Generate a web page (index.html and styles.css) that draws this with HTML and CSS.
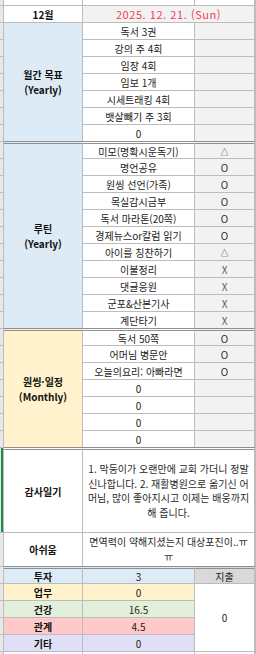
FILE: index.html
```html
<!DOCTYPE html>
<html lang="ko">
<head>
<meta charset="utf-8">
<title>12월</title>
<link rel="stylesheet" href="styles.css">
</head>
<body>
<div class="sheet">
  <!-- partial top row -->
  <div class="s"></div><div class="a"></div><div class="b"></div><div class="c"></div><div class="d"></div>
  <!-- header -->
  <div class="s"></div><div class="a bold">12월</div><div class="bc date">2025. 12. 21. (Sun)</div><div class="d"></div>

  <!-- 월간 목표 -->
  <div class="s"></div><div class="a blue r7 bold m"><span>월간 목표</span><span>(Yearly)</span></div><div class="b">독서 3권</div><div class="c gray"></div><div class="d"></div>
  <div class="s"></div><div class="b">강의 주 4회</div><div class="c gray"></div><div class="d"></div>
  <div class="s"></div><div class="b">임장 4회</div><div class="c gray"></div><div class="d"></div>
  <div class="s"></div><div class="b">임보 1개</div><div class="c gray"></div><div class="d"></div>
  <div class="s"></div><div class="b">시세트래킹 4회</div><div class="c gray"></div><div class="d"></div>
  <div class="s"></div><div class="b">뱃살빼기 주 3회</div><div class="c gray"></div><div class="d"></div>
  <div class="s"></div><div class="b">0</div><div class="c gray"></div><div class="d"></div>

  <!-- 루틴 -->
  <div class="s"></div><div class="a blue r11 bold m top"><span>루틴</span><span>(Yearly)</span></div><div class="b top">미모(명확시운독기)</div><div class="c gray top sym tri">△</div><div class="d"></div>
  <div class="s"></div><div class="b">명언공유</div><div class="c gray sym">O</div><div class="d"></div>
  <div class="s"></div><div class="b">원씽 선언(가족)</div><div class="c gray sym">O</div><div class="d"></div>
  <div class="s"></div><div class="b">목실감시금부</div><div class="c gray sym">O</div><div class="d"></div>
  <div class="s"></div><div class="b">독서 마라톤(20쪽)</div><div class="c gray sym">O</div><div class="d"></div>
  <div class="s"></div><div class="b">경제뉴스or칼럼 읽기</div><div class="c gray sym">O</div><div class="d"></div>
  <div class="s"></div><div class="b">아이를 칭찬하기</div><div class="c gray sym tri">△</div><div class="d"></div>
  <div class="s"></div><div class="b">이불정리</div><div class="c gray sym x">X</div><div class="d"></div>
  <div class="s"></div><div class="b">댓글응원</div><div class="c gray sym x">X</div><div class="d"></div>
  <div class="s"></div><div class="b">군포&amp;산본기사</div><div class="c gray sym x">X</div><div class="d"></div>
  <div class="s"></div><div class="b">계단타기</div><div class="c gray sym x">X</div><div class="d"></div>

  <!-- 원씽·일정 -->
  <div class="s"></div><div class="a yellow r7 bold m top"><span>원씽·일정</span><span>(Monthly)</span></div><div class="b top">독서 50쪽</div><div class="c gray top sym">O</div><div class="d"></div>
  <div class="s"></div><div class="b">어머님 병문안</div><div class="c gray sym">O</div><div class="d"></div>
  <div class="s"></div><div class="b">오늘의요리: 아빠라면</div><div class="c gray sym">O</div><div class="d"></div>
  <div class="s"></div><div class="b">0</div><div class="c gray"></div><div class="d"></div>
  <div class="s"></div><div class="b">0</div><div class="c gray"></div><div class="d"></div>
  <div class="s"></div><div class="b">0</div><div class="c gray"></div><div class="d"></div>
  <div class="s"></div><div class="b">0</div><div class="c gray"></div><div class="d"></div>

  <!-- 감사일기 -->
  <div class="s r5 sel"></div><div class="a r5 bold top">감사일기</div>
  <div class="bc r5 m para top"><span>1. 막둥이가 오랜만에 교회 가더니 정말</span><span>신나합니다. 2. 재활병원으로 옮기신 어</span><span>머님, 많이 좋아지시고 이제는 배웅까지</span><span>해 줍니다.</span></div>
  <div class="d r5"></div>

  <!-- 아쉬움 -->
  <div class="s r2"></div><div class="a r2 bold">아쉬움</div>
  <div class="bc r2 m para"><span>면역력이 약해지셨는지 대상포진이..ㅠ</span><span>ㅠ</span></div>
  <div class="d r2"></div>

  <!-- 투자 / 지출 -->
  <div class="s"></div><div class="a blue bold top">투자</div><div class="b blue top">3</div><div class="c head top">지출</div><div class="d"></div>
  <div class="s"></div><div class="a yellow bold">업무</div><div class="b yellow">0</div><div class="c r4">0</div><div class="d orange"></div>
  <div class="s"></div><div class="a green bold">건강</div><div class="b green">16.5</div><div class="d green2"></div>
  <div class="s"></div><div class="a pink bold">관계</div><div class="b pink">4.5</div><div class="d red"></div>
  <div class="s"></div><div class="a lav bold">기타</div><div class="b lav">0</div><div class="d lav2"></div>

  <!-- partial bottom row -->
  <div class="s"></div><div class="a"></div><div class="b"></div><div class="c"></div><div class="d"></div>
</div>
</body>
</html>
```

FILE: styles.css
```css
html, body {
  margin: 0;
  padding: 0;
  background: #ffffff;
  overflow: hidden;
}

.sheet {
  display: grid;
  grid-template-columns: 4px 79px 112px 60px 1fr;
  grid-template-rows: 6px;
  grid-auto-rows: 17px;
  width: 256px;
  font-family: "Noto Sans CJK KR", "Noto Sans", sans-serif;
  font-size: 10px;
  color: #222222;
}

.sheet > div {
  box-sizing: border-box;
  border-right: 1px solid #bcbcbc;
  border-bottom: 1px solid #bcbcbc;
  display: flex;
  align-items: center;
  justify-content: center;
  text-align: center;
  white-space: nowrap;
  min-width: 0;
  line-height: 13px;
  background: #ffffff;
}

.s { grid-column: 1; background: #e8e8e8 !important; }
.a { grid-column: 2; }
.b { grid-column: 3; }
.c { grid-column: 4; }
.d { grid-column: 5; }
.bc { grid-column: 3 / 5; }

.r2 { grid-row: span 2; }
.r4 { grid-row: span 4; }
.r5 { grid-row: span 5; }
.r7 { grid-row: span 7; }
.r11 { grid-row: span 11; }

.m { flex-direction: column; }
.m > span { display: block; }

.bold { font-weight: 700; color: #111111; }
.sheet > .a.m { line-height: 15px; }

.sheet > .para { line-height: 14.5px; color: #2a2a2a; }

.date {
  background: #f2f2f2 !important;
  color: #f03e54;
  font-size: 11px;
  letter-spacing: 0.55px;
}

.sheet > .top {
  border-top: 3px double #8f8f8f;
  margin-top: -1px;
}

.sel {
  box-shadow: inset 1px 0 0 #e8e8e8, inset 3px 0 0 #1f8a4c;
}

.blue { background: #ddebf7 !important; }
.gray { background: #f2f2f2 !important; }
.yellow { background: #fff2cc !important; }
.green { background: #e2efda !important; }
.pink { background: #ffc9c9 !important; }
.lav { background: #e0dff7 !important; }
.head { background: #d9d9d9 !important; }
.orange { background: #f8cbad !important; }
.green2 { background: #c6e0b4 !important; }
.red { background: #ff9f9f !important; }
.lav2 { background: #cfcff5 !important; }

.sym { color: #2e2e2e; font-size: 10px; }
.sheet > .tri { font-size: 8px; color: #333333; }
.x { color: #5e5e5e; }
```
